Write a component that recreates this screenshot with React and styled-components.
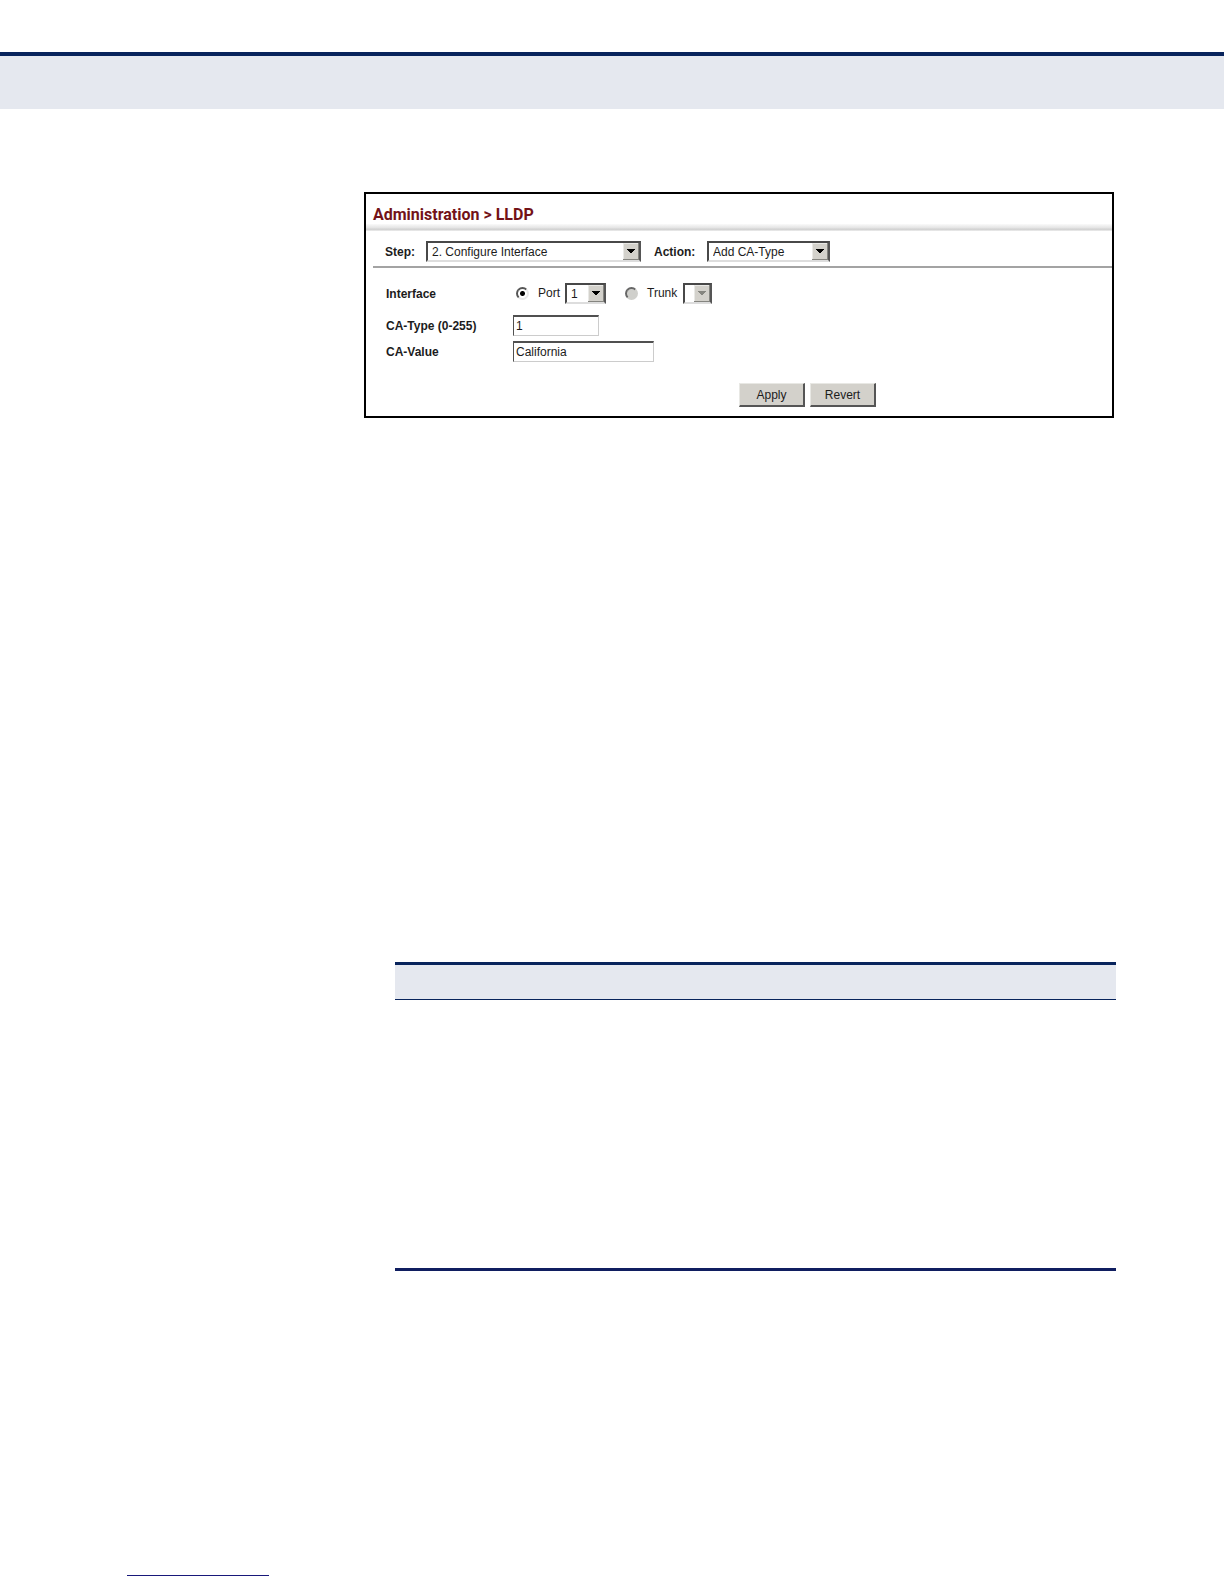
import React, { useState } from 'react';
import styled, { createGlobalStyle } from 'styled-components';

const GlobalStyle = createGlobalStyle`
  * {
    box-sizing: border-box;
  }

  body {
    margin: 0;
    background: #fff;
    color: #1c1c1c;
    font-family: "Liberation Sans", Arial, sans-serif;
    font-size: 12px;
    line-height: 16px;
  }
`;

const Page = styled.div`
  padding: 52px 0 8px;
`;

const Banner = styled.header`
  height: 57px;
  background: #e5e8ef;
  border-top: 4px solid #08245c;
`;

const Content = styled.main`
  padding: 83px 108px 0 364px;
`;

const Panel = styled.form`
  margin-right: 2px;
  padding-bottom: 9px;
  border: 2px solid #000;
`;

const PanelTitle = styled.h1`
  margin: 0;
  padding: 12px 7px 0;
  height: 30px;
  color: #731217;
  font-family: Roboto, "Liberation Sans", sans-serif;
  font-size: 16px;
  line-height: 18px;
  font-weight: bold;
`;

const Shade = styled.div`
  height: 7px;
  background: linear-gradient(#fafafa, #e4e4e4 55%, #cfcfcf 75%, #eee);
`;

const StepBar = styled.div`
  display: flex;
  align-items: center;
  height: 37px;
  margin-left: 7px;
  padding: 5px 0 0 12px;
  border-bottom: 2px solid #a3a3a3;
`;

const StepLabel = styled.label`
  flex: none;
  width: ${(props) => props.$width}px;
  padding-top: 1px;
  font-weight: bold;
`;

const Fields = styled.div`
  padding: 14px 0 0 20px;
`;

const Row = styled.div`
  display: flex;
  align-items: center;
  height: 22px;
  margin-bottom: ${(props) => (props.$last ? 0 : props.$gap)}px;
`;

const FieldLabel = styled.label`
  flex: none;
  width: 127px;
  padding-top: 2px;
  font-weight: bold;
`;

const RadioLabel = styled.label`
  display: flex;
  align-items: center;
  flex: none;
  gap: 9px;
  width: ${(props) => props.$width}px;
  margin-left: ${(props) => props.$indent}px;
`;

const Radio = styled.input`
  appearance: none;
  flex: none;
  width: 13px;
  height: 13px;
  margin: 0;
  border: 2px solid;
  border-color: #555 #e8e8e8 #e8e8e8 #555;
  border-radius: 50%;
  background: #fff;

  &:checked {
    background: radial-gradient(circle, #000 0 2px, #fff 3px);
  }

  &:disabled {
    background: #d0d0cc;
    border-color: #666 #d0d0cc #d0d0cc #666;
  }
`;

const SelectBox = styled.span`
  position: relative;
  display: block;
  flex: none;
  width: ${(props) => props.$width}px;
  height: 21px;
  margin-right: ${(props) => props.$after || 0}px;

  select {
    appearance: none;
    display: block;
    width: 100%;
    height: 100%;
    margin: 0;
    padding: 1px 0 0 4px;
    border: 2px solid;
    border-color: #484848 #555 #ddd #484848;
    border-radius: 0;
    background: #fff;
    color: #1c1c1c;
    font: inherit;
    opacity: 1;
  }

  svg {
    position: absolute;
    top: 2px;
    right: 2px;
    pointer-events: none;
  }
`;

const TextInput = styled.input`
  width: ${(props) => props.$width}px;
  height: 21px;
  margin: 0;
  padding: 1px 2px 0;
  border: 1px solid;
  border-top-width: 2px;
  border-color: #505050 #ccc #ccc #505050;
  border-radius: 0;
  background: #fff;
  color: #1c1c1c;
  font: inherit;
`;

const Buttons = styled.div`
  display: flex;
  gap: 5px;
  margin: 21px 0 0 50%;
`;

const Button = styled.button`
  width: 66px;
  height: 24px;
  padding: 0;
  border: 1px solid;
  border-width: 1px 2px 2px 1px;
  border-color: #e8e8e4 #555 #555 #e8e8e4;
  border-radius: 0;
  background: #d3d1cb;
  color: #1c1c1c;
  font: inherit;
`;

const TableFrame = styled.section`
  height: 309px;
  margin: 544px 0 0 31px;
  border-top: 3px solid #08245c;
  border-bottom: 3px solid #101e60;
`;

const TableHead = styled.div`
  height: 35px;
  background: #e5e8ef;
  border-bottom: 1px solid #08245c;
`;

const FooterRule = styled.hr`
  width: 142px;
  height: 1px;
  margin: 304px 0 0 127px;
  border: 0;
  background: #18187a;
`;

function Dropdown({ width, after, disabled, children, ...rest }) {
  return (
    <SelectBox $width={width} $after={after}>
      <select disabled={disabled} {...rest}>{children}</select>
      <svg width="16" height="17" viewBox="0 0 16 17" aria-hidden="true">
        <path d="M0 0h16v17H0z" fill="#d3d1cb" />
        <path d="M0 16V0h15v1H1v15z" fill="#e9e9e6" />
        <path d="M15 0h1v17H0v-1h15z" fill="#858580" />
        <path d="M4 6h8v1h-1v1h-1v1H9v1H7V9H6V8H5V7H4z" fill={disabled ? '#85857f' : '#000'} />
      </svg>
    </SelectBox>
  );
}

export default function App() {
  const [target, setTarget] = useState('port');
  const [caType, setCaType] = useState('1');
  const [caValue, setCaValue] = useState('California');

  return (
    <Page>
      <GlobalStyle />
      <Banner />
      <Content>
        <Panel onSubmit={(e) => e.preventDefault()}>
          <PanelTitle>Administration &gt; LLDP</PanelTitle>
          <Shade />
          <StepBar>
            <StepLabel $width={41} htmlFor="step">Step:</StepLabel>
            <Dropdown id="step" width={215} after={13}>
              <option>2. Configure Interface</option>
            </Dropdown>
            <StepLabel $width={53} htmlFor="action">Action:</StepLabel>
            <Dropdown id="action" width={123}>
              <option>Add CA-Type</option>
            </Dropdown>
          </StepBar>

          <Fields>
            <Row $gap={10}>
              <FieldLabel as="span">Interface</FieldLabel>
              <RadioLabel $indent={3} $width={49}>
                <Radio
                  type="radio"
                  name="target"
                  checked={target === 'port'}
                  onChange={() => setTarget('port')}
                />
                Port
              </RadioLabel>
              <Dropdown aria-label="Port" width={41}>
                <option>1</option>
              </Dropdown>
              <RadioLabel $indent={19} $width={58}>
                <Radio type="radio" name="target" disabled />
                Trunk
              </RadioLabel>
              <Dropdown aria-label="Trunk" width={29} disabled />
            </Row>
            <Row $gap={4}>
              <FieldLabel htmlFor="ca-type">CA-Type (0-255)</FieldLabel>
              <TextInput
                id="ca-type"
                $width={86}
                value={caType}
                onChange={(e) => setCaType(e.target.value)}
              />
            </Row>
            <Row $last>
              <FieldLabel htmlFor="ca-value">CA-Value</FieldLabel>
              <TextInput
                id="ca-value"
                $width={141}
                value={caValue}
                onChange={(e) => setCaValue(e.target.value)}
              />
            </Row>
          </Fields>

          <Buttons>
            <Button type="submit">Apply</Button>
            <Button type="reset">Revert</Button>
          </Buttons>
        </Panel>

        <TableFrame>
          <TableHead />
        </TableFrame>
      </Content>
      <FooterRule />
    </Page>
  );
}
